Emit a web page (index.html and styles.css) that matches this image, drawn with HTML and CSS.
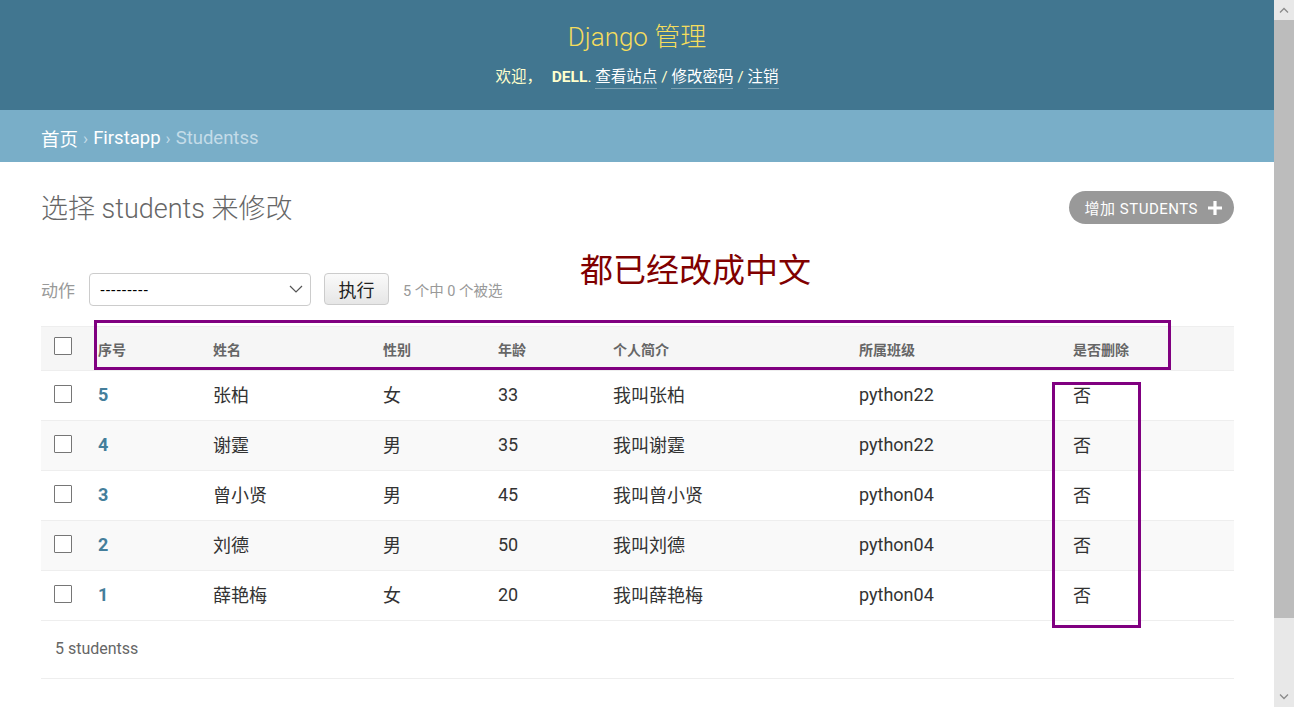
FILE: index.html
```html
<!DOCTYPE html>
<html lang="zh">
<head>
<meta charset="utf-8">
<title>选择 students 来修改 | Django 站点管理员</title>
<link rel="stylesheet" href="styles.css">
</head>
<body>
<div class="page">
  <header class="header">
    <div class="branding">Django 管理</div>
    <div class="user-tools">欢迎， <strong>DELL</strong>. <a href="#">查看站点</a> / <a href="#">修改密码</a> / <a href="#">注销</a></div>
  </header>
  <nav class="breadcrumbs"><a href="#">首页</a> <span class="sep">›</span> <a href="#">Firstapp</a> <span class="sep">›</span> <span class="current">Studentss</span></nav>
  <main class="content">
    <div class="title-row">
      <h1>选择 students 来修改</h1>
      <a class="addlink" href="#">增加 STUDENTS
        <svg width="14" height="14" viewBox="0 0 14 14"><path d="M5.4 0h3.2v5.4H14v3.2H8.6V14H5.4V8.6H0V5.4h5.4z" fill="#fff"/></svg>
      </a>
    </div>
    <div class="actions">
      <span class="label">动作</span>
      <div class="select"><span>---------</span>
        <svg width="14" height="8" viewBox="0 0 14 8"><path d="M1 1l6 6 6-6" fill="none" stroke="#555" stroke-width="1.2"/></svg>
      </div>
      <button class="go">执行</button>
      <span class="counter">5 个中 0 个被选</span>
      <span class="note">都已经改成中文</span>
    </div>
    <div class="table-wrap">
      <table class="result">
        <colgroup>
          <col class="c-check"><col class="c-id"><col class="c-name"><col class="c-sex"><col class="c-age"><col class="c-intro"><col class="c-class"><col class="c-del">
        </colgroup>
        <thead>
          <tr><th class="check"><span class="box"></span></th><th>序号</th><th>姓名</th><th>性别</th><th>年龄</th><th>个人简介</th><th>所属班级</th><th>是否删除</th></tr>
        </thead>
        <tbody>
          <tr><td class="check"><span class="box"></span></td><td class="id"><a href="#">5</a></td><td>张柏</td><td>女</td><td>33</td><td>我叫张柏</td><td>python22</td><td>否</td></tr>
          <tr class="alt"><td class="check"><span class="box"></span></td><td class="id"><a href="#">4</a></td><td>谢霆</td><td>男</td><td>35</td><td>我叫谢霆</td><td>python22</td><td>否</td></tr>
          <tr><td class="check"><span class="box"></span></td><td class="id"><a href="#">3</a></td><td>曾小贤</td><td>男</td><td>45</td><td>我叫曾小贤</td><td>python04</td><td>否</td></tr>
          <tr class="alt"><td class="check"><span class="box"></span></td><td class="id"><a href="#">2</a></td><td>刘德</td><td>男</td><td>50</td><td>我叫刘德</td><td>python04</td><td>否</td></tr>
          <tr><td class="check"><span class="box"></span></td><td class="id"><a href="#">1</a></td><td>薛艳梅</td><td>女</td><td>20</td><td>我叫薛艳梅</td><td>python04</td><td>否</td></tr>
        </tbody>
      </table>
      <div class="mark mark-head"></div>
      <div class="mark mark-col"></div>
    </div>
    <p class="paginator">5 studentss</p>
  </main>
</div>
<div class="scrollbar">
  <div class="sb-up"><svg width="10" height="6" viewBox="0 0 10 6"><path d="M1 5.5l4-4 4 4" fill="none" stroke="#8a8a8a" stroke-width="1.3"/></svg></div>
  <div class="sb-thumb"></div>
  <div class="sb-track"></div>
  <div class="sb-down"><svg width="10" height="6" viewBox="0 0 10 6"><path d="M1 0.5l4 4 4-4" fill="none" stroke="#8a8a8a" stroke-width="1.3"/></svg></div>
</div>
</body>
</html>
```
FILE: styles.css
```css
* { box-sizing: border-box; }
html, body { margin: 0; padding: 0; overflow: hidden; height: 707px; }
body {
  font-family: Roboto, "Noto Sans CJK SC", sans-serif;
  color: #333;
  background: #fff;
}
a { text-decoration: none; }
.page { width: 1274px; }

.header {
  height: 110px;
  background: #417690;
  display: flex;
  flex-direction: column;
  align-items: center;
  padding-top: 20px;
}
.branding {
  color: #f5dd5d;
  font-size: 26px;
  font-weight: 300;
  line-height: 34px;
}
.user-tools {
  margin-top: 11px;
  color: #ffc;
  font-size: 15.5px;
  line-height: 24px;
}
.user-tools strong { font-weight: 700; margin-left: 6px; }
.user-tools a {
  color: #fff;
  border-bottom: 1px solid rgba(255,255,255,0.3);
  padding-bottom: 2px;
}

.breadcrumbs {
  height: 52px;
  background: #79aec8;
  padding: 3px 41px 0;
  display: flex;
  align-items: center;
  gap: 5px;
  font-size: 18.5px;
  color: #c4dce8;
}
.breadcrumbs a { color: #fff; }
.breadcrumbs .sep { color: #c4dce8; font-size: 17px; }
.breadcrumbs .current { color: #c4dce8; }

.content { padding: 0 40px 0 41px; }
.title-row {
  display: flex;
  justify-content: space-between;
  align-items: flex-start;
  padding-top: 29px;
}
h1 {
  margin: 0;
  font-size: 27px;
  font-weight: 300;
  color: #666;
  line-height: 36px;
}
.addlink {
  display: flex;
  align-items: center;
  gap: 10px;
  height: 33px;
  padding: 0 12px 0 16px;
  background: #999;
  color: #fff;
  border-radius: 17px;
  font-size: 15px;
  letter-spacing: 0.5px;
}

.actions {
  position: relative;
  margin-top: 45px;
  display: flex;
  align-items: center;
  height: 34px;
}
.actions .label { color: #999; font-size: 17px; width: 48px; }
.select {
  width: 222px;
  height: 33px;
  border: 1px solid #ccc;
  border-radius: 4px;
  display: flex;
  align-items: center;
  justify-content: space-between;
  padding: 0 7px 0 10px;
  font-size: 15px;
  font-family: "Liberation Sans", sans-serif;
  letter-spacing: 0.4px;
  color: #000;
  background: #fff;
}
.go {
  margin-left: 13px;
  width: 65px;
  height: 32px;
  border: 1px solid #ccc;
  border-radius: 4px;
  background: linear-gradient(#fafafa, #e6e6e6);
  font-family: "Noto Sans CJK SC", sans-serif;
  font-size: 18px;
  color: #222;
  padding: 0;
}
.counter { margin-left: 14px; color: #999; font-size: 14.5px; }
.note {
  position: absolute;
  left: 539px;
  top: -28px;
  font-size: 33px;
  color: #800000;
  font-family: "Noto Sans CJK SC", sans-serif;
}

.table-wrap { position: relative; margin-top: 20px; }
.result {
  width: 1193px;
  border-collapse: collapse;
  table-layout: fixed;
}
.c-check { width: 49px; }
.c-id { width: 115px; }
.c-name { width: 170px; }
.c-sex { width: 115px; }
.c-age { width: 115px; }
.c-intro { width: 246px; }
.c-class { width: 214px; }
.result th {
  background: #f6f6f6;
  border-top: 1px solid #eee;
  border-bottom: 1px solid #eee;
  height: 44px;
  text-align: left;
  font-size: 14px;
  font-weight: 700;
  color: #666;
  padding: 1px 8px 0;
}
.result td {
  height: 50px;
  border-bottom: 1px solid #eee;
  padding: 0 8px 3px;
  font-size: 18px;
  color: #333;
  vertical-align: middle;
}
.result tr.alt td { background: #f9f9f9; }
.result .check { padding: 0 0 0 13px; }
.result th.check { padding-top: 0; }
.box {
  display: block;
  width: 18px;
  height: 18px;
  border: 1px solid #767676;
  border-radius: 1px;
  background: #fff;
  margin-top: -4px;
}
.result th .box { margin-top: -6px; }
.result td.id a { color: #447e9b; font-weight: 700; }

.mark { position: absolute; border: 3px solid #800080; }
.mark-head { left: 53px; top: -6px; width: 1077px; height: 50px; }
.mark-col { left: 1011px; top: 56px; width: 89px; height: 246px; }

.paginator {
  margin: 0;
  height: 58px;
  padding: 18px 0 0 14px;
  font-size: 16px;
  color: #666;
  border-bottom: 1px solid #eee;
}

.scrollbar {
  position: fixed;
  top: 0;
  right: 0;
  width: 20px;
  height: 707px;
  background: #e8e8e8;
  display: flex;
  flex-direction: column;
}
.sb-up, .sb-down { height: 20px; display: flex; align-items: center; justify-content: center; }
.sb-thumb { height: 598px; background: #bcbcbc; }
.sb-track { flex: 1; }
```
